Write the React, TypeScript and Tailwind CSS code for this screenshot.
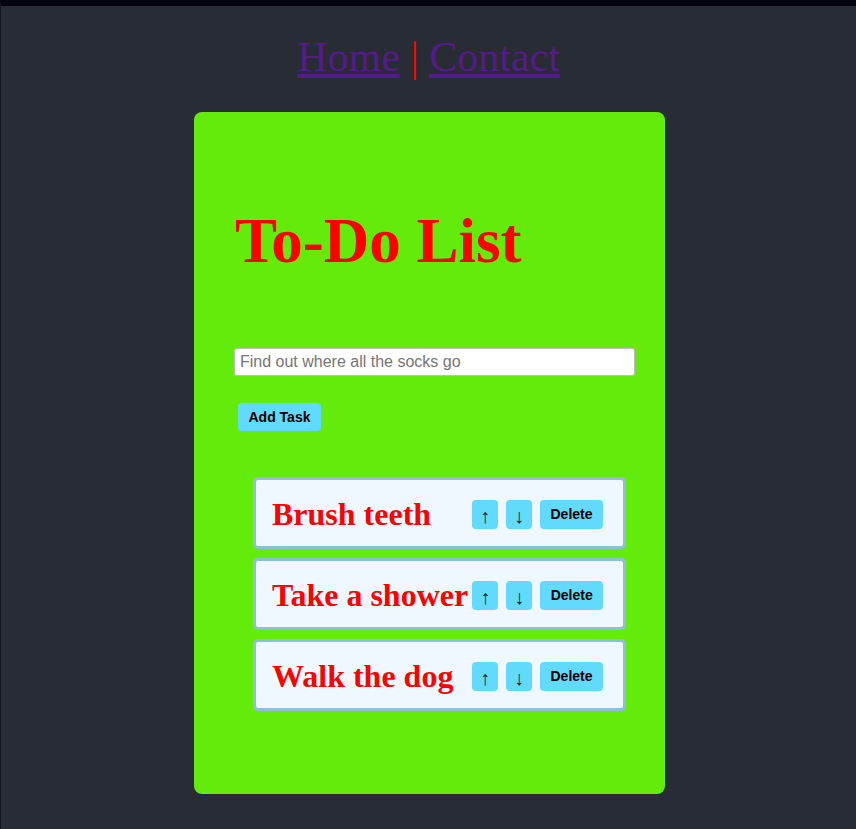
import { useState } from "react"

const serif = { fontFamily: '"Liberation Serif", "Times New Roman", serif' }

interface Task {
  id: number
  text: string
}

const initialTasks: Task[] = [
  { id: 1, text: "Brush teeth" },
  { id: 2, text: "Take a shower" },
  { id: 3, text: "Walk the dog" },
]

export default function App() {
  const [tasks, setTasks] = useState<Task[]>(initialTasks)
  const [draft, setDraft] = useState("")

  const addTask = () => {
    if (!draft.trim()) return
    setTasks((t) => [...t, { id: Date.now(), text: draft.trim() }])
    setDraft("")
  }

  const move = (idx: number, dir: -1 | 1) => {
    const next = idx + dir
    if (next < 0 || next >= tasks.length) return
    const copy = [...tasks]
    ;[copy[idx], copy[next]] = [copy[next], copy[idx]]
    setTasks(copy)
  }

  const remove = (id: number) => setTasks((t) => t.filter((x) => x.id !== id))

  return (
    <div className="min-h-[829px] bg-[#282c34] border-t-[6px] border-l border-t-[#01040f] border-l-[#15181f] font-['Liberation_Sans',Arial,sans-serif]">
      {/* Nav */}
      <nav className="pt-[27px] text-center text-[42px] leading-[48px]" style={serif}>
        <a href="#" className="text-[#551a8b] underline">
          Home
        </a>
        <span className="text-[#ff0000]"> | </span>
        <a href="#" className="text-[#551a8b] underline">
          Contact
        </a>
      </nav>

      {/* Card */}
      <div className="mx-auto mt-[31px] w-[471px] rounded-[8px] bg-[#63eb0c] px-[40px] pt-[40px] pb-[83px] translate-x-[1px]">
        <h1 className="mt-[54px] ml-[1px] text-[63px] font-bold leading-[70px] text-[#ff0000]" style={serif}>
          To-Do List
        </h1>

        <input
          type="text"
          value={draft}
          onChange={(e) => setDraft(e.target.value)}
          placeholder="Find out where all the socks go"
          className="mt-[72px] block h-[28px] w-[401px] rounded-[3px] border border-[#bdbdbd] bg-white px-[5px] text-[16px] text-black placeholder:text-[#757575] outline-none"
        />

        <button
          onClick={addTask}
          className="ml-[4px] mt-[27px] block h-[28px] w-[83px] rounded-[4px] bg-[#61dafb] text-[14px] font-bold text-black"
        >
          Add Task
        </button>

        <ul className="mt-[46px] ml-[19px] flex flex-col gap-[9px]">
          {tasks.map((task, idx) => (
            <li
              key={task.id}
              className="flex h-[72px] w-[373px] items-center justify-between rounded-[5px] border-[3px] border-[#8fbedb] bg-[#f0f8ff] px-[16px] pt-[2px]"
            >
              <span className="whitespace-nowrap text-[32px] font-bold text-[#ff0000]" style={serif}>
                {task.text}
              </span>
              <div className="flex shrink-0 items-center">
                <button
                  onClick={() => move(idx, -1)}
                  className="mx-[4px] h-[29px] w-[26px] rounded-[4px] bg-[#61dafb] pt-[3px] text-[20px] leading-none text-[#14241e]"
                >
                  ↑
                </button>
                <button
                  onClick={() => move(idx, 1)}
                  className="mx-[4px] h-[29px] w-[26px] rounded-[4px] bg-[#61dafb] pt-[3px] text-[20px] leading-none text-[#14241e]"
                >
                  ↓
                </button>
                <button
                  onClick={() => remove(task.id)}
                  className="mx-[4px] h-[29px] w-[63px] rounded-[4px] bg-[#61dafb] text-[14px] font-bold text-black"
                >
                  Delete
                </button>
              </div>
            </li>
          ))}
        </ul>
      </div>
    </div>
  )
}
